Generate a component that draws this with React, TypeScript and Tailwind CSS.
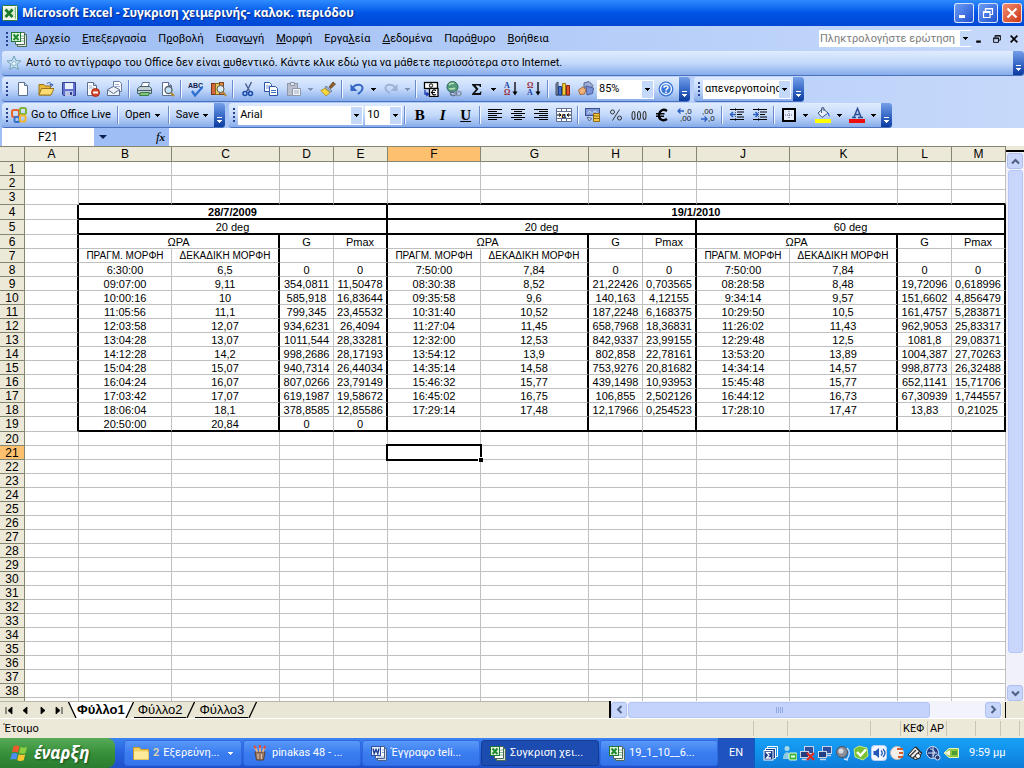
import React from 'react';
import clsx from 'clsx';

/* ---------- shared drawing helpers ---------- */

function Ico({ children, size = 16 }: { children: React.ReactNode; size?: number }) {
  return (
    <svg width={size} height={size} viewBox="0 0 16 16" className="block shrink-0" aria-hidden="true">
      {children}
    </svg>
  );
}

const Down = ({ light, muted }: { light?: boolean; muted?: boolean }) => (
  <svg width="5" height="3" viewBox="0 0 5 3" className="block" shapeRendering="crispEdges" aria-hidden="true">
    <path d="M0 0h5v1H4v1H3v1H2V2H1V1H0z" fill={light ? '#fff' : muted ? '#7d8fb5' : '#000'} />
  </svg>
);

const AppIcon = () => (
  <Ico>
    <rect x=".5" y=".5" width="15" height="15" rx="1" fill="#f4f8ee" stroke="#2f7d36" />
    <path d="M9 4h5M9 6.500h5M9 9h5M9 11.500h5" stroke="#a9cfa6" />
    <rect x="2" y="3" width="10" height="10" fill="#dff0d8" />
    <path d="M3.500 4.500 10.500 12M10.500 4.500 3.500 12" stroke="#1c7a2b" strokeWidth="2.600" />
    <path d="M13.500 2v12" stroke="#7db87b" />
  </Ico>
);

const ExcelIcon = () => (
  <Ico>
    <path d="M6.500 3.500h9v12h-9z" fill="#dbe6d8" stroke="#4d6a56" />
    <path d="M4.500 1.500h9v12h-9z" fill="#fff" stroke="#4d6a56" />
    <path d="M10 5h3M10 7.500h3M10 10h3" stroke="#8ab593" />
    <rect x=".5" y="1.500" width="9" height="9" fill="#e4f3e0" stroke="#1d7a31" />
    <path d="m2.500 3.500 5 5.500M7.500 3.500 2.500 9" stroke="#1e8a2e" strokeWidth="2" />
  </Ico>
);

const WordIcon = () => (
  <Ico>
    <path d="M6.500 3.500h9v12h-9z" fill="#d5ddec" stroke="#4b5f88" />
    <path d="M4.500 1.500h9v12h-9z" fill="#fff" stroke="#4b5f88" />
    <path d="M11 5h2M11 7.500h2M6 12h7" stroke="#8ca6d4" />
    <rect x=".5" y="1.500" width="9" height="9" fill="#eef3fd" stroke="#2a4f9e" />
    <path d="m2 3.500 1.200 5L5 4.500l1.800 4L8 3.500" fill="none" stroke="#1c3e93" strokeWidth="1.400" />
  </Ico>
);

/* ---------- toolbar icons ---------- */

const page = <path d="M3.500 1.500h6l3 3v10h-9z" fill="#fff" stroke="#5d7091" />;
const fold = <path d="M9.500 1.500v3h3" fill="#c9d6ec" stroke="#5d7091" />;

const icons = {
  create: <Ico>{page}{fold}</Ico>,
  open: (
    <Ico>
      <path d="M1 3.500h5l1.500 1.500h5v9H1z" fill="#e8b93b" stroke="#9a7318" />
      <path d="M3.500 7.500H16L13 14H1z" fill="#fddc72" stroke="#9a7318" />
      <path d="M9 2.500c2-1.500 4-1 4.500 1M12 3.500h3l-1.500 2z" fill="none" stroke="#3e66b0" />
    </Ico>
  ),
  save: (
    <Ico>
      <path d="M1.500 1.500h13v13h-12l-1-1z" fill="#6371cf" stroke="#333f92" />
      <rect x="4" y="2" width="8" height="6" fill="#e9effc" />
      <rect x="4" y="10" width="8" height="5" fill="#b9c3e6" />
      <rect x="9" y="11" width="2" height="3" fill="#333f92" />
    </Ico>
  ),
  permission: (
    <Ico>
      {page}{fold}
      <path d="M5 5h3M5 7h5" stroke="#9db1d3" />
      <circle cx="11.500" cy="11.500" r="4" fill="#d8452a" stroke="#a32b16" />
      <path d="M9 11.500h5" stroke="#fff" strokeWidth="2" />
    </Ico>
  ),
  mail: (
    <Ico>
      <path d="M6.500.5h6l2 2v8h-8z" fill="#fff" stroke="#667ca3" />
      <path d="M8 3.500h4M8 5.500h5" stroke="#9db1d3" />
      <path d="m.5 8.500 6-3 6 3v6H.5z" fill="#eef3fb" stroke="#5d7091" />
      <path d="m1 9 5.500 3.500L12 9" fill="none" stroke="#5d7091" />
    </Ico>
  ),
  print: (
    <Ico>
      <path d="M5 6.500 6.500 1.500h7L12 6.500" fill="#fff" stroke="#5d7091" />
      <path d="M1.500 7.500 4 5.500h9.500l2 2v5h-14z" fill="#c2cfd5" stroke="#45606a" />
      <path d="M2 9.500h13" stroke="#45606a" />
      <path d="M3.500 14.500h9l1-3h-9z" fill="#7fc87b" stroke="#3d7a46" />
    </Ico>
  ),
  preview: (
    <Ico>
      {page}{fold}
      <circle cx="9.500" cy="9" r="3.500" fill="#c7e3f7" stroke="#56616f" strokeWidth="1.300" />
      <path d="m12 12 3 3" stroke="#b3862e" strokeWidth="2.200" />
    </Ico>
  ),
  spelling: (
    <Ico>
      <text x="0" y="6.500" fontSize="7" fontWeight="700" fontFamily="Liberation Sans, sans-serif" fill="#10204a">ABC</text>
      <path d="m4 10 3 4.500L14.500 6" fill="none" stroke="#2f6fd0" strokeWidth="2.300" />
    </Ico>
  ),
  research: (
    <Ico>
      <rect x=".5" y="2.500" width="4" height="11" fill="#d46a3a" stroke="#7c351a" />
      <rect x="4.500" y="2.500" width="4" height="11" fill="#e8c95b" stroke="#84671a" />
      <rect x="8.500" y="1.500" width="4" height="12" fill="#d98a4a" stroke="#7c451a" />
      <circle cx="9.500" cy="8" r="3.500" fill="#d9ecf8" stroke="#5c5c5c" />
      <path d="m12 11 3 4" stroke="#b3862e" strokeWidth="2" />
    </Ico>
  ),
  cut: (
    <Ico>
      <path d="M11.500 1 6.500 11M5.500 2.500 10 11" stroke="#4a6190" strokeWidth="1.500" />
      <circle cx="5" cy="12.500" r="2" fill="none" stroke="#1c4ba8" strokeWidth="1.500" />
      <circle cx="10.500" cy="12.500" r="2" fill="none" stroke="#1c4ba8" strokeWidth="1.500" />
    </Ico>
  ),
  copy: (
    <Ico>
      <path d="M1.500 1.500h5l2 2v7h-7z" fill="#fff" stroke="#2d55a5" />
      <path d="M3 5h4M3 7h4" stroke="#6f91cf" />
      <path d="M6.500 5.500h6l2 2v7h-8z" fill="#fff" stroke="#2d55a5" />
      <path d="M8 9.500h5M8 11.500h5" stroke="#3d6bc0" />
    </Ico>
  ),
  paste: (
    <Ico>
      <rect x="1.500" y="2.500" width="10" height="12" fill="#b9bfcb" stroke="#8e98aa" />
      <path d="M4.500 1.500h4v3h-4z" fill="#dfe3ea" stroke="#8e98aa" />
      <path d="M6.500 7.500h8v7h-8z" fill="#f0f3f8" stroke="#8e98aa" />
      <path d="M8 10h5M8 12h5" stroke="#a3adbf" />
    </Ico>
  ),
  painter: (
    <Ico>
      <path d="m9 6 4-5 2.500 2L11 7.500z" fill="#8e5f2c" stroke="#5c3b17" strokeWidth=".7" />
      <path d="m6 5 6 5-2 1.500L5 7z" fill="#9fb3c9" stroke="#52647b" strokeWidth=".7" />
      <path d="M5 7.500 .8 9.500 6 15l4-3.500z" fill="#f7d73c" stroke="#a98b16" strokeWidth=".8" />
    </Ico>
  ),
  undo: (
    <Ico>
      <path d="M4 6.500C7 2.500 14 3 13.500 7.500c-.2 2.500-2.500 4-4.500 5.500" fill="none" stroke="#3467c4" strokeWidth="2" />
      <path d="M1.500 3v7h7z" fill="#3467c4" />
    </Ico>
  ),
  redo: (
    <Ico>
      <path d="M12 6.500C9 2.500 2 3 2.500 7.500 2.700 10 5 11 7 12" fill="none" stroke="#9fb2d6" strokeWidth="2" />
      <path d="M14.500 3v7h-7z" fill="#9fb2d6" />
    </Ico>
  ),
  euroConvert: (
    <Ico>
      <rect x="1.500" y="1.500" width="13" height="6" fill="#fff" stroke="#000" strokeWidth="1.300" />
      <circle cx="8" cy="4.500" r="1.700" fill="none" stroke="#000" />
      <rect x="6.500" y="7.500" width="8.500" height="8" fill="#fff" stroke="#000" strokeWidth="1.300" />
      <path d="M13 9.500c-3-1.500-4 .5-4 2s1.500 3.200 4 2M8 11.500h4" fill="none" stroke="#000" strokeWidth="1.200" />
      <path d="M2 9v4h3M3.500 11.500 5.500 13l-2 2" fill="none" stroke="#1836a8" strokeWidth="1.300" />
    </Ico>
  ),
  link: (
    <Ico>
      <circle cx="6.500" cy="6" r="5.500" fill="#4f9a78" stroke="#2c6a63" />
      <path d="M3 4c2-2.500 4-1 5-2M3 8c2-1 3 1 6-1" fill="none" stroke="#b7e0b3" strokeWidth="1.600" />
      <rect x="4.500" y="10.500" width="6" height="4" rx="2" fill="none" stroke="#66758f" strokeWidth="1.500" />
      <rect x="9" y="10.500" width="6" height="4" rx="2" fill="none" stroke="#8896ad" strokeWidth="1.500" />
    </Ico>
  ),
  sum: (
    <Ico>
      <path d="M3 3h9v3h-1L10 4.500H6.500L9.500 8l-3.500 4h4.500l1-1.500h1L12 14H3v-1l4-4.700L3 4z" fill="#101010" />
    </Ico>
  ),
  sortAsc: (
    <Ico>
      <text x="1" y="7" fontSize="8" fontFamily="Liberation Serif, serif" fontWeight="700" fill="#1b3f9c">A</text>
      <text x="1" y="14" fontSize="8" fontFamily="Liberation Serif, serif" fontWeight="700" fill="#9c2a35">Ω</text>
      <path d="M12 1v12" stroke="#000" strokeWidth="1.300" />
      <path d="M9.500 10.500h5L12 14.500z" fill="#000" />
    </Ico>
  ),
  sortDesc: (
    <Ico>
      <text x="1" y="7" fontSize="8" fontFamily="Liberation Serif, serif" fontWeight="700" fill="#9c2a35">Ω</text>
      <text x="1" y="14" fontSize="8" fontFamily="Liberation Serif, serif" fontWeight="700" fill="#1b3f9c">A</text>
      <path d="M12 1v12" stroke="#000" strokeWidth="1.300" />
      <path d="M9.500 10.500h5L12 14.500z" fill="#000" />
    </Ico>
  ),
  chart: (
    <Ico>
      <path d="M1 2.500 3 1v13H1zM1 14h14" fill="#8d97a8" stroke="#3c4a66" />
      <path d="M3.500 5.500h3V14h-3z" fill="#3f72cf" stroke="#1b3c84" />
      <path d="M7.500 2.500h3V14h-3z" fill="#f4cb3a" stroke="#94741a" />
      <path d="M11.500 4.500h3V14h-3z" fill="#e0512c" stroke="#8b2712" />
    </Ico>
  ),
  drawing: (
    <Ico>
      <path d="m6 2 5-1.500 4 4L11 9 6 6z" fill="#9dabd6" stroke="#53648a" />
      <path d="m8 5 7.500 2-1 5.500L9 14z" fill="#7790d6" stroke="#4a5f9e" />
      <path d="M4.500 6 8 8.500 6.500 13l-4.500.5L.500 9z" fill="#efb07a" stroke="#a66a3b" />
    </Ico>
  ),
  help: (
    <Ico>
      <circle cx="8" cy="8" r="6.800" fill="#f4f8ff" stroke="#3a73d2" strokeWidth="1.300" />
      <circle cx="8" cy="8" r="4.800" fill="#3a78d8" />
      <path d="M6 6.700C6 4.500 10 4.500 10 6.700 10 8 8 8 8 9.500M8 10.500v1.500" fill="none" stroke="#fff" strokeWidth="1.500" />
    </Ico>
  ),
  left: <Ico><path d="M1 2.500h14M1 4.500h9M1 6.500h14M1 8.500h9M1 10.500h14M1 12.500h9" stroke="#000" /></Ico>,
  center: <Ico><path d="M1 2.500h14M4 4.500h8M1 6.500h14M4 8.500h8M1 10.500h14M4 12.500h8" stroke="#000" /></Ico>,
  right: <Ico><path d="M1 2.500h14M6 4.500h9M1 6.500h14M6 8.500h9M1 10.500h14M6 12.500h9" stroke="#000" /></Ico>,
  merge: (
    <Ico>
      <path d="M.5 1.500h15v13H.5zM.5 4.500h15M.5 11.500h15M5.500 1.500v3M10.500 1.500v3M5.500 11.500v3M10.500 11.500v3" fill="#fff" stroke="#5d6f94" />
      <text x="5.500" y="10.500" fontSize="8" fontWeight="700" fontFamily="Liberation Sans, sans-serif">a</text>
      <path d="M1 8h4M15 8h-4M3 6.500 5 8 3 9.500M13 6.500 11 8l2 1.500" stroke="#000" fill="none" />
    </Ico>
  ),
  currency: (
    <Ico>
      <rect x=".5" y="1.500" width="14" height="7" fill="#7f9ad6" stroke="#37508f" />
      <path d="M3 6.500c0-3 3-3 3 0M8 6.500c0-3 4-3 4 0" stroke="#e3ecff" fill="none" />
      <path d="M8.500 6.500h6v8h-6zM8.500 9h6M8.500 11.500h6" fill="#f3c846" stroke="#8f6b12" />
      <path d="m2 10 2 4 3-2.500z" fill="#c8d5ef" stroke="#5d6f94" />
    </Ico>
  ),
  percent: (
    <Ico>
      <circle cx="4.500" cy="5" r="2" fill="none" stroke="#333" />
      <circle cx="11.500" cy="11" r="2" fill="none" stroke="#333" />
      <path d="m11.500 2.500-7 11" stroke="#333" />
    </Ico>
  ),
  thousands: (
    <Ico>
      <path d="M2.500 4.500c2 0 2 8 0 8s-2-8 0-8M8 4.500c2 0 2 8 0 8s-2-8 0-8M13.500 4.500c2 0 2 8 0 8s-2-8 0-8" fill="none" stroke="#333" strokeWidth="1.100" />
    </Ico>
  ),
  euro: (
    <Ico>
      <path d="M13 4C9.500 1.500 5.500 3 5 8s4.500 6.500 8 4" fill="none" stroke="#000" strokeWidth="2.300" />
      <path d="M2 6.800h8.500M2 9.300h8" stroke="#000" strokeWidth="1.400" />
    </Ico>
  ),
  moreDec: (
    <Ico>
      <path d="M1 4h6M3.500 1.500 1 4l2.500 2.500" fill="none" stroke="#2b5fc4" strokeWidth="1.300" />
      <text x="8" y="7" fontSize="8" fontFamily="Liberation Sans, sans-serif" fill="#111">,0</text>
      <text x="3" y="14" fontSize="8" fontFamily="Liberation Sans, sans-serif" fill="#111">,00</text>
    </Ico>
  ),
  lessDec: (
    <Ico>
      <text x="2" y="7" fontSize="8" fontFamily="Liberation Sans, sans-serif" fill="#111">,00</text>
      <path d="M1 12h6M4.500 9.500 7 12l-2.500 2.500" fill="none" stroke="#2b5fc4" strokeWidth="1.300" />
      <text x="8" y="14" fontSize="8" fontFamily="Liberation Sans, sans-serif" fill="#111">,0</text>
    </Ico>
  ),
  outdent: (
    <Ico>
      <path d="M1 2.500h14M8 5h7M8 7.500h5M8 10h7M1 12.500h14" stroke="#000" />
      <path d="M6.500 7.500h-5M4 5 1.500 7.500 4 10" fill="none" stroke="#2b5fc4" strokeWidth="1.500" />
      <path d="M6.500 1v14" stroke="#4b5870" strokeDasharray="1 1" />
    </Ico>
  ),
  indent: (
    <Ico>
      <path d="M1 2.500h14M8 5h7M8 7.500h5M8 10h7M1 12.500h14" stroke="#000" />
      <path d="M1 7.500h5M3.500 5 6 7.500 3.500 10" fill="none" stroke="#2b5fc4" strokeWidth="1.500" />
      <path d="M6.500 1v14" stroke="#4b5870" strokeDasharray="1 1" />
    </Ico>
  ),
  borders: (
    <Ico>
      <rect x="2" y="2" width="12" height="12" fill="#e9f0fc" stroke="#000" strokeWidth="2" />
      <path d="M8 4v8M4 8h8" stroke="#5a6c8e" strokeDasharray="1 1" />
    </Ico>
  ),
  fill: (
    <Ico>
      <path d="m3 6 5-4.500L13 6l-6 4.500z" fill="#e6eefb" stroke="#44587f" />
      <path d="M6.500 6V1.500c0-1.500 2.500-1.500 2.500 0V4" fill="none" stroke="#44587f" />
      <path d="M12.500 5.500c2 .5 2.500 3 2 4.500-1-1-1.500-2-2-4.500z" fill="#3866c4" />
      <rect x="0" y="12" width="16" height="4" fill="#ffff00" />
    </Ico>
  ),
  fontColor: (
    <Ico>
      <path d="M3 10.500h4M9 10.500h5M5 10 8.500 1.500 12 10M6.200 7.500h4.500" fill="none" stroke="#2e4f94" strokeWidth="1.500" />
      <rect x="0" y="12" width="16" height="4" fill="#ee0d0d" />
    </Ico>
  ),
};

/* ---------- toolbar parts ---------- */

function Tool({ label, children }: { label: string; children: React.ReactNode }) {
  return (
    <button type="button" aria-label={label} title={label} className="flex h-[22px] w-[23px] shrink-0 items-center justify-center">
      {children}
    </button>
  );
}

const Drop = ({ label, muted }: { label: string; muted?: boolean }) => (
  <button type="button" aria-label={label} className="flex h-[22px] w-[11px] shrink-0 items-center justify-center">
    <Down muted={muted} />
  </button>
);

const Sep = () => (
  <span className="flex w-1.5 shrink-0 justify-center">
    <span className="h-[18px] w-px bg-[#6a8ccb]" />
    <span className="h-[18px] w-px bg-[#f1f6ff]" />
  </span>
);

const Grip = () => (
  <span className="flex w-[9px] shrink-0 flex-col items-center gap-0.5">
    {[0, 1, 2, 3].map((n) => (
      <span key={n} className="size-0.5 bg-[#27418f]" />
    ))}
  </span>
);

const Overflow = () => (
  <button
    type="button"
    aria-label="Επιλογές γραμμής εργαλείων"
    className="flex w-[11px] shrink-0 flex-col items-center justify-end gap-0.5 self-stretch rounded-r-[3px] bg-linear-to-b from-[#759fe8] via-[#3b6cc9] to-[#0b3aa0] pb-1"
  >
    <span className="h-px w-[5px] bg-white" />
    <Down light />
  </button>
);

function Toolbar({ label, children }: { label: string; children: React.ReactNode }) {
  return (
    <div
      role="toolbar"
      aria-label={label}
      className="flex h-[25px] shrink-0 items-center rounded-[3px] border-b border-[#4a71bd] bg-linear-to-b from-[#e0ecfe] via-[#c4d9fb] to-[#87acea]"
    >
      {children}
    </div>
  );
}

function Combo({ label, value, className }: { label: string; value: string; className: string }) {
  return (
    <span className={clsx('relative flex h-[19px] shrink-0 items-center bg-white', className)}>
      <select aria-label={label} defaultValue={value} className="h-full w-full appearance-none overflow-hidden bg-white pl-0.5 text-[11px] leading-4 outline-none">
        <option>{value}</option>
      </select>
      <span className="pointer-events-none absolute inset-y-px right-px flex w-[11px] items-center justify-center bg-[#c4d8fa]">
        <Down />
      </span>
    </span>
  );
}

/* ---------- worksheet ---------- */

const columns = [
  ['A', 'w-[54px]'], ['B', 'w-[93px]'], ['C', 'w-[108px]'], ['D', 'w-[54px]'], ['E', 'w-[54px]'],
  ['F', 'w-[93px]'], ['G', 'w-[108px]'], ['H', 'w-[54px]'], ['I', 'w-[54px]'],
  ['J', 'w-[93px]'], ['K', 'w-[108px]'], ['L', 'w-[54px]'], ['M', 'w-[54px]'],
];

const summer = [
  ['6:30:00', '6,5', '0', '0'],
  ['09:07:00', '9,11', '354,0811', '11,50478'],
  ['10:00:16', '10', '585,918', '16,83644'],
  ['11:05:56', '11,1', '799,345', '23,45532'],
  ['12:03:58', '12,07', '934,6231', '26,4094'],
  ['13:04:28', '13,07', '1011,544', '28,33281'],
  ['14:12:28', '14,2', '998,2686', '28,17193'],
  ['15:04:28', '15,07', '940,7314', '26,44034'],
  ['16:04:24', '16,07', '807,0266', '23,79149'],
  ['17:03:42', '17,07', '619,1987', '19,58672'],
  ['18:06:04', '18,1', '378,8585', '12,85586'],
  ['20:50:00', '20,84', '0', '0'],
];

const winter20 = [
  ['7:50:00', '7,84', '0', '0'],
  ['08:30:38', '8,52', '21,22426', '0,703565'],
  ['09:35:58', '9,6', '140,163', '4,12155'],
  ['10:31:40', '10,52', '187,2248', '6,168375'],
  ['11:27:04', '11,45', '658,7968', '18,36831'],
  ['12:32:00', '12,53', '842,9337', '23,99155'],
  ['13:54:12', '13,9', '802,858', '22,78161'],
  ['14:35:14', '14,58', '753,9276', '20,81682'],
  ['15:46:32', '15,77', '439,1498', '10,93953'],
  ['16:45:02', '16,75', '106,855', '2,502126'],
  ['17:29:14', '17,48', '12,17966', '0,254523'],
  ['', '', '', ''],
];

const winter60 = [
  ['7:50:00', '7,84', '0', '0'],
  ['08:28:58', '8,48', '19,72096', '0,618996'],
  ['9:34:14', '9,57', '151,6602', '4,856479'],
  ['10:29:50', '10,5', '161,4757', '5,283871'],
  ['11:26:02', '11,43', '962,9053', '25,83317'],
  ['12:29:48', '12,5', '1081,8', '29,08371'],
  ['13:53:20', '13,89', '1004,387', '27,70263'],
  ['14:34:14', '14,57', '998,8773', '26,32488'],
  ['15:45:48', '15,77', '652,1141', '15,71706'],
  ['16:44:12', '16,73', '67,30939', '1,744557'],
  ['17:28:10', '17,47', '13,83', '0,21025'],
  ['', '', '', ''],
];

type Cell = { text: string; span: number };
const single = (text: string): Cell => ({ text, span: 1 });
const titles = ['ΠΡΑΓΜ. ΜΟΡΦΗ', 'ΔΕΚΑΔΙΚΗ ΜΟΡΦΗ', '', ''];
const heads: Cell[] = [{ text: 'ΩΡΑ', span: 2 }, single('G'), single('Pmax')];

function cellsOf(row: number): Cell[] {
  if (row === 4) return [single(''), { text: '28/7/2009', span: 4 }, { text: '19/1/2010', span: 8 }];
  if (row === 5) return [single(''), ...['20 deg', '20 deg', '60 deg'].map((text) => ({ text, span: 4 }))];
  if (row === 6) return [single(''), ...heads, ...heads, ...heads];
  if (row === 7) return ['', ...titles, ...titles, ...titles].map(single);
  if (row >= 8 && row <= 19) {
    const n = row - 8;
    return ['', ...summer[n], ...winter20[n], ...winter60[n]].map(single);
  }
  return columns.map(() => single(''));
}

function heavyRight(row: number, col: number) {
  if (row < 4 || row > 19) return false;
  if (col === 0 || col === 4 || col === 12) return true;
  if (col === 8) return row >= 5;
  return row >= 6 && (col === 2 || col === 6 || col === 10);
}

const heavyRows = [3, 4, 5, 19];
const heavyBottom = (row: number, col: number) => col > 0 && heavyRows.includes(row);

function SheetRow({ row }: { row: number }) {
  let col = -1;
  return (
    <tr className={heavyRows.includes(row) ? 'h-[15px]' : 'h-3.5'}>
      <th
        scope="row"
        className={clsx(
          'border-r border-b border-[#848672] p-0 text-[12px] leading-3 font-normal',
          row === 21 ? 'bg-[#fcc06e]' : 'bg-[#ece9d8]',
        )}
      >
        {row}
      </th>
      {cellsOf(row).map((cell, n) => {
        col += cell.span;
        const active = row === 21 && col === 5;
        return (
          <td
            key={n}
            colSpan={cell.span}
            className={clsx(
              'p-0 text-center leading-3 whitespace-nowrap',
              row === 7 ? 'text-[10px]' : 'text-[11px]',
              row === 4 && 'font-bold',
              heavyRight(row, col) ? 'border-r-2 border-r-black' : 'border-r border-r-[#c0c0c0]',
              heavyBottom(row, col) ? 'border-b-2 border-b-black' : 'border-b border-b-[#c0c0c0]',
              active && 'relative',
            )}
          >
            {cell.text}
            {active && (
              <span className="absolute -inset-0.5 border-2 border-black">
                <span className="absolute -right-[3px] -bottom-[3px] size-[5px] border-t border-l border-white bg-black" />
              </span>
            )}
          </td>
        );
      })}
    </tr>
  );
}

function Worksheet() {
  return (
    <table className="h-full w-[1006px] shrink-0 table-fixed border-separate border-spacing-0 self-start bg-white font-['Liberation_Sans',Arial,sans-serif]">
      <colgroup>
        <col className="w-[25px]" />
        {columns.map(([name, width]) => (
          <col key={name} className={width} />
        ))}
      </colgroup>
      <thead>
        <tr className="h-4">
          <td className="border-t border-r border-b border-[#848672] bg-[#ece9d8] p-0" />
          {columns.map(([name]) => (
            <th
              key={name}
              scope="col"
              className={clsx(
                'border-t border-r border-b border-[#848672] p-0 text-[12px] leading-3 font-normal',
                name === 'F' ? 'bg-[#fcc06e]' : 'bg-[#ece9d8]',
              )}
            >
              {name}
            </th>
          ))}
        </tr>
      </thead>
      <tbody>
        {Array.from({ length: 38 }, (_, n) => (
          <SheetRow key={n} row={n + 1} />
        ))}
        <tr>
          <td className="border-r border-[#848672] bg-[#ece9d8] p-0" />
          {columns.map(([name]) => (
            <td key={name} className="border-r border-[#c0c0c0] p-0" />
          ))}
        </tr>
      </tbody>
    </table>
  );
}

/* ---------- scroll bars ---------- */

function ScrollButton({ label, d }: { label: string; d: string }) {
  return (
    <button
      type="button"
      aria-label={label}
      className="flex size-4 shrink-0 items-center justify-center rounded-[3px] border border-[#aebff0] bg-[#c8d6fb]"
    >
      <svg width="9" height="9" viewBox="0 0 9 9" aria-hidden="true">
        <path d={d} fill="none" stroke="#4d6185" strokeWidth="2" />
      </svg>
    </button>
  );
}

/* ---------- sheet tabs ---------- */

const Edge = ({ back, white }: { back?: boolean; white?: boolean }) => (
  <svg width="9" height="16" viewBox="0 0 9 16" className="block shrink-0" aria-hidden="true">
    {white && <path d="M0 0h9L1 16H0z" fill="#fff" />}
    {back && <path d="M0 0h9v16H8z" fill="#fff" />}
    <path d={back ? 'M.5 0 8 16' : 'M8.500 0 1 16'} stroke="#000" strokeWidth="1.300" />
  </svg>
);

function SheetTabs() {
  const nav = [
    ['Πρώτο φύλλο', 'M2 1v7M8 1v7L4 4.500z'],
    ['Προηγούμενο φύλλο', 'M6 1v7L2 4.500z'],
    ['Επόμενο φύλλο', 'M3 1v7l4-3.500z'],
    ['Τελευταίο φύλλο', 'M7 1v7M1 1v7l4-3.500z'],
  ];
  return (
    <div className="flex min-w-0 flex-1 items-center border-t border-[#b9b6a4] font-['Liberation_Sans',Arial,sans-serif]">
      {nav.map(([label, d]) => (
        <button key={label} type="button" aria-label={label} className="flex h-4 w-[17px] shrink-0 items-center justify-center">
          <svg width="9" height="9" viewBox="0 0 9 9" aria-hidden="true">
            <path d={d} fill="#000" stroke="#000" strokeWidth=".8" />
          </svg>
        </button>
      ))}
      <Edge back />
      <button type="button" className="h-4 bg-white text-[13px] leading-4 font-bold">Φύλλο1</button>
      <Edge white />
      <button type="button" className="h-4 border-b border-black px-1 text-[13px] leading-4">Φύλλο2</button>
      <Edge />
      <button type="button" className="h-4 border-b border-black px-1 text-[13px] leading-4">Φύλλο3</button>
      <Edge />
    </div>
  );
}

/* ---------- menu data ---------- */

const menus = [
  ['', 'Α', 'ρχείο'], ['', 'Ε', 'πεξεργασία'], ['Π', 'ρ', 'οβολή'], ['Εισαγ', 'ω', 'γή'], ['', 'Μ', 'ορφή'],
  ['Εργα', 'λ', 'εία'], ['', 'Δ', 'εδομένα'], ['Παρά', 'θ', 'υρο'], ['', 'Β', 'οήθεια'],
];

const minimize = <path d="M3 11.500h6" stroke="currentColor" strokeWidth="3" />;
const restore = <path d="M5.500 6V3.500h7v6H10M3.500 6.500h6.500v6H3.500zM5 4h8M3 7.500h7" fill="none" stroke="currentColor" strokeWidth="1.200" />;
const close = <path d="m3.500 3.500 9 9M12.500 3.500l-9 9" stroke="currentColor" strokeWidth="2.200" />;

/* ---------- taskbar ---------- */

const WindowsFlag = () => (
  <svg width="20" height="18" viewBox="0 0 20 18" aria-hidden="true">
    <path d="M3.500 2.500c2.500-1.500 4-1 6 0L8 8.500c-2-1-4-1-6 0z" fill="#f0592b" />
    <path d="M10.500 3c2.500 1 4 1 6.500 0l-1.500 6c-2.500 1-4 1-6.500 0z" fill="#8bcf3e" />
    <path d="M1.700 9.800c2.300-1.300 4-1 6 0l-1.500 6c-2-1-4-1-6 0z" fill="#4b8df2" />
    <path d="M8.700 10.300c2.500 1 4 1 6.500 0l-1.500 6c-2.500 1-4 1-6.500 0z" fill="#fbc62f" />
  </svg>
);

const FolderIcon = () => (
  <Ico>
    <path d="M.5 2.500h6L8 4.500h7.500v10H.5z" fill="#f4d264" stroke="#c99b2a" />
    <path d="M1 6.500h14.500v8H1z" fill="#fdeb9b" />
  </Ico>
);

const PaintIcon = () => (
  <Ico>
    <path d="M3 7h10l-1.500 8h-7z" fill="#9d7a66" stroke="#5c4336" />
    <path d="M5.500 7 2.500 1.500M8 7V1M10.500 7l2.500-5" stroke="#e5b184" strokeWidth="1.800" />
    <path d="m2 1 2 2M8 0v3M13.500 1 12 3.500" stroke="#e24b35" strokeWidth="2" />
    <path d="M6 9v5M9.500 9v5" stroke="#d9c3b3" />
  </Ico>
);

const tasks = [
  { icon: <FolderIcon />, count: '2', text: 'Εξερεύνη...', group: true },
  { icon: <PaintIcon />, text: 'pinakas 48 - ...' },
  { icon: <WordIcon />, text: 'Έγγραφο teli...' },
  { icon: <ExcelIcon />, text: 'Συγκριση χει...', active: true },
  { icon: <ExcelIcon />, text: '19_1_10__6...' },
];

const computers = (
  <>
    <rect x="5.500" y="1.500" width="9" height="7" fill="#2d4f9d" stroke="#c8d3e8" />
    <rect x="1.500" y="6.500" width="8" height="6" fill="#223d80" stroke="#c8d3e8" />
    <path d="M3 14.500h6M9 10.500h5" stroke="#c8d3e8" strokeWidth="1.500" />
  </>
);

const tray = [
  <><path d="M4.500 3V1.500h10v10H13" fill="none" stroke="#fff" /><path d="M2.500 5V3.500h10v10H11" fill="#1a3f92" stroke="#fff" /><rect x="1" y="5.500" width="9" height="9.500" fill="#173a8c" stroke="#fff" /><path d="M8 7.500H3.500L6 10.200 3.500 13H8" fill="none" stroke="#fff" strokeWidth="1.300" /></>,
  <><circle cx="6" cy="3.500" r="2.500" fill="#a9dceb" /><path d="M2 14c0-9 8-9 8 0z" fill="#8fcbe0" /><rect x="8" y="8" width="8" height="7" rx="1" fill="#3cb53c" stroke="#e5ffe0" /><path d="M10 10.500h4v2h-4z" fill="#eaffea" /></>,
  <>{computers}<path d="m8 8 7 7M15 8l-7 7" stroke="#e02a1b" strokeWidth="2.200" /></>,
  <>{computers}</>,
  <><circle cx="7" cy="7" r="5.500" fill="#8b8f98" stroke="#4b5160" /><circle cx="6" cy="6" r="2.500" fill="#d8dbe2" /><path d="M12 3c3 3 3 7 0 11M9 14l4 1" fill="none" stroke="#cfe2ff" strokeWidth="1.300" /></>,
  <><path d="M1 4 6 1l8 2 1 8-5 4-8-3z" fill="#7ac231" stroke="#bfe88d" /><path d="m4 7 3.500 3.500L13 4.500" fill="none" stroke="#fff" strokeWidth="2.400" /></>,
  <><rect x=".5" y=".5" width="15" height="15" rx="3" fill="#f3f7ff" stroke="#bcd0f3" /><path d="M2.500 6h2L8 3v10l-3.500-3h-2z" fill="#2257b8" /><path d="M10 5.500c1.500 1.500 1.500 3.500 0 5M12 4c2.500 2.500 2.500 5.500 0 8" fill="none" stroke="#2257b8" strokeWidth="1.300" /></>,
  <><circle cx="8" cy="8" r="6.500" fill="#f5efe9" stroke="#c8bdb6" /><path d="M8 4h6M10 8h4M9 12h5" stroke="#d25b32" strokeWidth="1.800" /></>,
  <><path d="m1 10 7-8 7 6-6 7z" fill="#efefef" stroke="#222" /><path d="m3 11 6-6M6 13l6-6M9 2l5 6" stroke="#333" strokeWidth="1.300" /><circle cx="11" cy="11" r="2.500" fill="#fff" stroke="#222" /></>,
  <><circle cx="7.500" cy="7.500" r="6" fill="#1f3c86" stroke="#d7e2f5" /><path d="M5 4c4 0 6 3 3 7M3 8h9M8 2v11" fill="none" stroke="#d7e2f5" /><circle cx="12.500" cy="12.500" r="2.500" fill="#273b70" stroke="#d7e2f5" /></>,
  <><path d="M1 8 6 3.500h9.500v9H6z" fill="#8dc63f" stroke="#e9f7b8" /><path d="M1.500 8 7 5v6z" fill="#f5f4e2" /><path d="M9 6h5v4H9z" fill="#4e9c35" /></>,
];

/* ---------- application ---------- */

export default function App() {
  const caption = 'flex size-5 shrink-0 items-center justify-center rounded-[3px] border border-white/80 text-white';
  return (
    <div className="flex h-screen w-full flex-col overflow-hidden bg-[#ece9d8] font-[Roboto,sans-serif] text-[11px] text-black">
      <header className="flex h-[26px] shrink-0 items-center gap-1 bg-linear-to-b from-[#2f8cff] via-[#0054e6] to-[#0047d4] pr-0.5 pl-0.5">
        <AppIcon />
        <h1 className="min-w-0 flex-1 truncate font-['Noto_Sans',sans-serif] text-[12px] leading-5 font-bold text-white [text-shadow:1px_1px_1px_#0b2a86]">
          Microsoft Excel - Συγκριση χειμερινής- καλοκ. περιόδου
        </h1>
        <button type="button" aria-label="Ελαχιστοποίηση" className={clsx(caption, 'bg-linear-to-br from-[#6f9bf5] to-[#1d4fd0]')}><Ico>{minimize}</Ico></button>
        <button type="button" aria-label="Επαναφορά" className={clsx(caption, 'bg-linear-to-br from-[#6f9bf5] to-[#1d4fd0]')}><Ico>{restore}</Ico></button>
        <button type="button" aria-label="Κλείσιμο" className={clsx(caption, 'bg-linear-to-br from-[#f08a6c] to-[#cc3510]')}><Ico>{close}</Ico></button>
      </header>

      <div className="flex h-[25px] shrink-0 items-center bg-linear-to-r from-[#9ebdf3] to-[#c6d9fb] pr-0.5 pl-0.5">
        <Grip />
        <ExcelIcon />
        <nav className="flex flex-1 pl-0.5">
          {menus.map(([pre, key, post]) => (
            <button key={pre + key + post} type="button" className="px-1.5 leading-5">
              {pre}<u>{key}</u>{post}
            </button>
          ))}
        </nav>
        <label className="flex h-[17px] w-[152px] items-center bg-white">
          <input aria-label="Ερώτηση" placeholder="Πληκτρολογήστε ερώτηση" className="h-full min-w-0 flex-1 pl-px outline-none placeholder:text-[#7c7c7c]" />
          <span className="flex h-[15px] w-[11px] items-center justify-center bg-[#c4d8fa]"><Down /></span>
        </label>
        <button type="button" aria-label="Ελαχιστοποίηση βιβλίου" className="flex w-[17px] justify-center"><Ico size={12}>{minimize}</Ico></button>
        <button type="button" aria-label="Επαναφορά βιβλίου" className="flex w-[17px] justify-center"><Ico size={12}>{restore}</Ico></button>
        <button type="button" aria-label="Κλείσιμο βιβλίου" className="flex w-[17px] justify-center"><Ico size={12}>{close}</Ico></button>
      </div>

      <div className="flex shrink-0 flex-col gap-px bg-linear-to-r from-[#9ebdf3] to-[#c6d9fb] pl-0.5">
        <Toolbar label="Γνησιότητα του Office">
          <span className="flex min-w-0 flex-1 items-center gap-1 pl-1">
            <Ico>
              <path d="m8 1 2 4.500 5 .5-4 3.500 1.500 5L8 12l-4.500 2.500L5 9.500 1 6l5-.5z" fill="#c7e2ee" stroke="#6fa1ba" />
              <circle cx="8" cy="8.500" r="2" fill="#f6fbff" stroke="#8cb8cf" />
            </Ico>
            <a href="#genuine" className="truncate leading-5">
              Αυτό το αντίγραφο του Office δεν είναι <u>α</u>υθεντικό. Κάντε κλικ εδώ για να μάθετε περισσότερα στο Internet.
            </a>
          </span>
          <Overflow />
        </Toolbar>

        <div className="flex gap-1">
          <Toolbar label="Βασική">
            <Grip />
            <Tool label="Δημιουργία">{icons.create}</Tool>
            <Tool label="Άνοιγμα">{icons.open}</Tool>
            <Tool label="Αποθήκευση">{icons.save}</Tool>
            <Tool label="Δικαιώματα">{icons.permission}</Tool>
            <Tool label="Ηλεκτρονικό ταχυδρομείο">{icons.mail}</Tool>
            <Sep />
            <Tool label="Εκτύπωση">{icons.print}</Tool>
            <Tool label="Προεπισκόπηση">{icons.preview}</Tool>
            <Sep />
            <Tool label="Ορθογραφία">{icons.spelling}</Tool>
            <Tool label="Έρευνα">{icons.research}</Tool>
            <Sep />
            <Tool label="Αποκοπή">{icons.cut}</Tool>
            <Tool label="Αντιγραφή">{icons.copy}</Tool>
            <Tool label="Επικόλληση">{icons.paste}</Tool>
            <Drop label="Επιλογές επικόλλησης" muted />
            <Tool label="Πινέλο μορφοποίησης">{icons.painter}</Tool>
            <Sep />
            <Tool label="Αναίρεση">{icons.undo}</Tool>
            <Drop label="Λίστα αναίρεσης" />
            <Tool label="Επανάληψη">{icons.redo}</Tool>
            <Drop label="Λίστα επανάληψης" muted />
            <Sep />
            <Tool label="Μετατροπή σε ευρώ">{icons.euroConvert}</Tool>
            <Tool label="Υπερ-σύνδεση">{icons.link}</Tool>
            <Tool label="Άθροιση">{icons.sum}</Tool>
            <Drop label="Συναρτήσεις" />
            <Tool label="Αύξουσα ταξινόμηση">{icons.sortAsc}</Tool>
            <Tool label="Φθίνουσα ταξινόμηση">{icons.sortDesc}</Tool>
            <Sep />
            <Tool label="Γράφημα">{icons.chart}</Tool>
            <Tool label="Σχεδίαση">{icons.drawing}</Tool>
            <Combo label="Ζουμ" value="85%" className="w-[57px]" />
            <Tool label="Βοήθεια">{icons.help}</Tool>
            <span className="w-0.5" />
            <Overflow />
          </Toolbar>
          <Toolbar label="Ευρώ">
            <Grip />
            <Combo label="Μετατροπή" value="απενεργοποίησ" className="mr-0.5 w-[88px]" />
            <Overflow />
          </Toolbar>
        </div>

        <div className="flex gap-1">
          <Toolbar label="Office Live">
            <Grip />
            <button type="button" className="flex h-[22px] items-center gap-1 pr-1">
              <Ico>
                <rect x="1" y="3" width="7" height="7" rx="2" fill="none" stroke="#e8632c" strokeWidth="2" />
                <rect x="9" y="1" width="6" height="6" rx="1.500" fill="none" stroke="#7fb33a" strokeWidth="2" />
                <rect x="3.500" y="10" width="5" height="5" rx="1.500" fill="none" stroke="#3a72c9" strokeWidth="2" />
                <rect x="9" y="8.500" width="5.500" height="6" rx="1.500" fill="none" stroke="#f2b62e" strokeWidth="2" />
              </Ico>
              Go to Office Live
            </button>
            <Sep />
            <button type="button" className="flex h-[22px] items-center gap-1 pr-1.5 pl-1">Open <Down /></button>
            <Sep />
            <button type="button" className="flex h-[22px] items-center gap-1 pr-1.5 pl-1">Save <Down /></button>
            <Overflow />
          </Toolbar>
          <Toolbar label="Μορφοποίηση">
            <Grip />
            <Combo label="Γραμματοσειρά" value="Arial" className="mr-0.5 w-[125px]" />
            <Combo label="Μέγεθος γραμματοσειράς" value="10" className="w-[37px]" />
            <Sep />
            <Tool label="Έντονα"><b className="font-['Liberation_Serif',serif] text-[15px] leading-4">B</b></Tool>
            <Tool label="Πλάγια"><b className="font-['Liberation_Serif',serif] text-[15px] leading-4 italic">I</b></Tool>
            <Tool label="Υπογράμμιση"><b className="font-['Liberation_Serif',serif] text-[15px] leading-4 underline">U</b></Tool>
            <Sep />
            <Tool label="Στοίχιση αριστερά">{icons.left}</Tool>
            <Tool label="Στοίχιση στο κέντρο">{icons.center}</Tool>
            <Tool label="Στοίχιση δεξιά">{icons.right}</Tool>
            <Tool label="Συγχώνευση">{icons.merge}</Tool>
            <Sep />
            <Tool label="Νομισματική μορφή">{icons.currency}</Tool>
            <Tool label="Ποσοστό">{icons.percent}</Tool>
            <Tool label="Χιλιάδες">{icons.thousands}</Tool>
            <Tool label="Ευρώ">{icons.euro}</Tool>
            <Tool label="Αύξηση δεκαδικών">{icons.moreDec}</Tool>
            <Tool label="Μείωση δεκαδικών">{icons.lessDec}</Tool>
            <Sep />
            <Tool label="Μείωση εσοχής">{icons.outdent}</Tool>
            <Tool label="Αύξηση εσοχής">{icons.indent}</Tool>
            <Sep />
            <Tool label="Περιγράμματα">{icons.borders}</Tool>
            <Drop label="Επιλογές περιγραμμάτων" />
            <Tool label="Χρώμα γεμίσματος">{icons.fill}</Tool>
            <Drop label="Χρώματα γεμίσματος" />
            <Tool label="Χρώμα γραμματοσειράς">{icons.fontColor}</Tool>
            <Drop label="Χρώματα γραμματοσειράς" />
            <span className="w-0.5" />
            <Overflow />
          </Toolbar>
        </div>
      </div>

      <div className="flex h-[18px] shrink-0 bg-[#9ebef5] pl-0.5">
        <input aria-label="Πλαίσιο ονόματος" defaultValue="F21" className="w-[92px] bg-white text-center text-[12px] leading-4 outline-none" />
        <button type="button" aria-label="Ονόματα" className="flex w-[18px] items-center justify-center">
          <svg width="8" height="4" viewBox="0 0 8 4" aria-hidden="true"><path d="M0 0h8L4 4z" fill="#0d1d4d" /></svg>
        </button>
        <button type="button" aria-label="Εισαγωγή συνάρτησης" className="flex flex-none basis-[57px] items-center justify-end pr-1 font-['Liberation_Serif',serif] text-[13px] leading-4 italic">
          <i>f</i><b className="text-[11px]">x</b>
        </button>
        <input aria-label="Γραμμή τύπων" className="min-w-0 flex-1 bg-white px-1 text-[12px] outline-none" />
      </div>

      <main className="flex min-h-0 flex-1 overflow-hidden bg-white">
        <Worksheet />
        <div className="flex min-w-[18px] flex-1 flex-col items-center gap-px bg-[#f1f1f9]">
          <div className="h-1.5 w-full shrink-0 border-b-2 border-black bg-[#ece9d8]" />
          <ScrollButton label="Κύλιση επάνω" d="M1 6.500 4.500 3 8 6.500" />
          <div className="w-[15px] flex-[485] rounded-[3px] border border-[#b3c6f7] bg-[#c8d6fb]" />
          <div className="flex-[30]" />
          <ScrollButton label="Κύλιση κάτω" d="M1 2.500 4.500 6 8 2.500" />
        </div>
      </main>

      <div className="flex h-[18px] shrink-0 items-stretch border-b border-white bg-[#e9e6d5]">
        <SheetTabs />
        <div className="flex w-[397px] shrink-0 items-center gap-px border-l-2 border-black bg-[#f3f3fb]">
          <ScrollButton label="Κύλιση αριστερά" d="M6.500 1 3 4.500 6.500 8" />
          <div className="flex h-4 w-[302px] items-center justify-center gap-px rounded-[3px] border border-[#b3c6f7] bg-[#c4d3fb]">
            {[0, 1, 2, 3].map((n) => (
              <span key={n} className="h-1.5 w-px bg-[#93a8e0]" />
            ))}
          </div>
          <div className="flex-1" />
          <ScrollButton label="Κύλιση δεξιά" d="M2.500 1 6 4.500 2.500 8" />
          <span className="h-4 w-1 border-r border-black bg-[#ece9d8]" />
        </div>
        <div className="w-[18px] shrink-0" />
      </div>

      <footer className="flex h-[19px] shrink-0 items-center bg-[#ece9d8] pr-1 pl-1">
        <span className="flex-1 leading-4">Έτοιμο</span>
        <span className="h-[15px] w-[34px] border-l border-[#c9c5b2]" />
        <span className="h-[15px] w-[83px] border-l border-[#c9c5b2]" />
        <span className="h-[15px] w-[30px] border-l border-[#c9c5b2]" />
        <span className="h-[15px] w-[27px] border-l border-[#c9c5b2] pl-0.5 leading-4">ΚΕΦ</span>
        <span className="h-[15px] w-[19px] border-l border-[#c9c5b2] text-center leading-4">ΑΡ</span>
        <span className="h-[15px] w-[29px] border-l border-[#c9c5b2]" />
        <span className="h-[15px] w-[25px] border-l border-[#c9c5b2]" />
        <span className="h-[15px] w-[20px] border-x border-[#c9c5b2]" />
      </footer>

      <div className="flex h-[30px] shrink-0 items-stretch bg-linear-to-b from-[#3b82f0] via-[#2661dd] to-[#1e50c8] text-white">
        <button
          type="button"
          className="flex w-[115px] shrink-0 items-center gap-1 rounded-r-lg bg-linear-to-b from-[#58ab58] via-[#37903a] to-[#2b7c2f] pl-2.5 font-['Noto_Sans',sans-serif] text-[17px] leading-6 font-bold italic [text-shadow:1px_1px_2px_#1b4a1d]"
        >
          <WindowsFlag />
          έναρξη
        </button>
        <div className="ml-[9px] flex min-w-0 flex-1 gap-px">
          {tasks.map((task) => (
            <button
              key={task.text}
              type="button"
              className={clsx(
                'my-0.5 flex w-[118px] min-w-0 items-center gap-1 rounded-[3px] border px-2 text-left leading-5 whitespace-nowrap',
                task.active ? 'border-[#153d96] bg-[#1c4cb0]' : 'border-[#2f6ae2] bg-linear-to-b from-[#5a98f8] via-[#3a7df0] to-[#3474ea]',
              )}
            >
              {task.icon}
              {task.count && <b className="text-[#d8d2ae]">{task.count}</b>}
              <span className="flex-1">{task.text}</span>
              {task.group && <Down light />}
            </button>
          ))}
        </div>
        <span className="flex w-9 shrink-0 items-center justify-center bg-[#1f53c0]">EN</span>
        <div className="flex w-[270px] shrink-0 items-center gap-0.5 border-l border-[#0a5ec0] bg-linear-to-b from-[#18a0f5] via-[#1190ec] to-[#0e7bd8] pl-2">
          {tray.map((drawing, n) => (
            <Ico key={n}>{drawing}</Ico>
          ))}
          <time className="flex-1 pl-2 leading-5">9:59 μμ</time>
        </div>
      </div>
    </div>
  );
}
